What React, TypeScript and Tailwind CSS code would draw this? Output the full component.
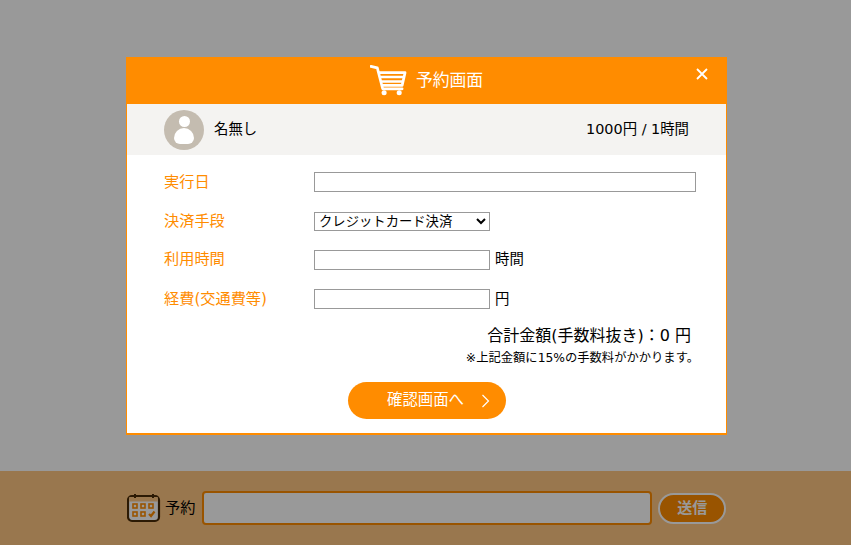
import React from "react";

const font = { fontFamily: '"DejaVu Sans", "Noto Sans CJK JP", sans-serif' };

function Cart() {
  return (
    <svg width="37" height="32" viewBox="0 0 38 32" fill="none" className="mr-[9px] -mt-[1px]">
      <path d="M1 2 L7.5 3.5 L13 25 H33" stroke="#fff" strokeWidth="2.8" strokeLinecap="round" strokeLinejoin="round" />
      <path d="M9 8.5 H36 L33 21.5 H12.5" stroke="#fff" strokeWidth="2.8" strokeLinejoin="round" />
      <path d="M11 13 H34.5 M12 17.5 H33.5" stroke="#fff" strokeWidth="2.6" />
      <circle cx="14.5" cy="29" r="2.6" fill="#fff" />
      <circle cx="30" cy="29" r="2.6" fill="#fff" />
    </svg>
  );
}

function Calendar() {
  return (
    <svg width="34" height="30" viewBox="0 0 34 30" fill="none">
      <rect x="1" y="3" width="31" height="25" rx="4" fill="#ffffff" stroke="#4a2c08" strokeWidth="2.2" />
      <path d="M2.2 4 H30.8 V8.5 H2.2 Z" fill="#ffc682" />
      <path d="M8 1 V5 M26 1 V5" stroke="#4a2c08" strokeWidth="2" />
      <g stroke="#ff8c00" strokeWidth="1.6" fill="none">
        <rect x="6" y="11" width="4" height="4" />
        <rect x="14" y="11" width="4" height="4" />
        <rect x="22" y="11" width="4" height="4" />
        <rect x="6" y="19" width="4" height="4" />
        <rect x="14" y="19" width="4" height="4" />
      </g>
      <path d="M22 21 L24 23 L27.5 18.5" stroke="#ff8c00" strokeWidth="2.2" />
    </svg>
  );
}

function Row({ label, children, tight }: { label: string; children: React.ReactNode; tight?: boolean }) {
  return (
    <div className="flex items-center h-[39px]">
      <div className={tight ? "w-[150px] text-[#ff8c00] text-[15.2px]" : "w-[150px] text-[#ff8c00] text-[15.2px] pt-[2px]"}>{label}</div>
      {children}
    </div>
  );
}

const inputCls = "w-[176px] h-[20px] border border-[#999] bg-white";

export default function App() {
  return (
    <div className="relative h-[545px] w-full overflow-hidden flex flex-col justify-end bg-white" style={font}>
      <footer className="h-[74px] bg-[#ffc682] flex items-center pl-[127px]">
        <Calendar />
        <span className="ml-[4px] text-[15.2px] text-black">予約</span>
        <div className="ml-[7px] w-[450px] h-[34px] rounded-[4px] border-2 border-[#ff8c00] bg-white" />
        <button className="ml-[6px] w-[68px] h-[31px] rounded-full bg-[#ff8c00] border-2 border-white text-white text-[15px] font-bold">
          送信
        </button>
      </footer>

      <div className="absolute inset-0 bg-black/40 flex justify-center items-start pt-[57px] pl-[2px]">
        <div className="w-[601px] h-[378px] bg-white border border-b-2 border-[#ff8c00] border-t-0 flex flex-col">
          <div className="relative h-[47px] -mx-[1px] bg-[#ff8c00] flex items-center justify-center text-white text-[16.8px]">
            <Cart />
            <span>予約画面</span>
            <svg width="12" height="12" viewBox="0 0 12 12" className="absolute left-[570px] top-[11px]">
              <path d="M1 1 L11 11 M11 1 L1 11" stroke="#fff" strokeWidth="1.8" />
            </svg>
          </div>

          <div className="h-[51px] bg-[#f4f3f1] flex items-center pl-[37px] pr-[37px] text-[14.4px] text-black">
            <div className="w-[40px] h-[40px] rounded-full bg-[#c4bcb0] overflow-hidden flex flex-col items-center">
              <div className="w-[11px] h-[11px] rounded-full bg-white mt-[6px]" />
              <div className="w-[20px] h-[16px] rounded-t-[10px] rounded-b-[6px] bg-white mt-[1px]" />
            </div>
            <span className="ml-[10px]">名無し</span>
            <span className="ml-auto">1000円 / 1時間</span>
          </div>

          <div className="flex-1 pl-[37px] pr-[30px] pt-[7px]">
            <Row label="実行日">
              <div className="w-[382px] h-[20px] border border-[#999] bg-white" />
            </Row>
            <Row label="決済手段">
              <select className="w-[176px] h-[19px] mt-[2px] border border-[#999] bg-white text-[13.33px] leading-[15px] text-black">
                <option>クレジットカード決済</option>
              </select>
            </Row>
            <Row label="利用時間" tight>
              <div className={inputCls} />
              <span className="ml-[5px] text-[14.4px] text-black">時間</span>
            </Row>
            <Row label="経費(交通費等)">
              <div className={inputCls} />
              <span className="ml-[5px] text-[14.4px] text-black pt-[2px]">円</span>
            </Row>
            <div className="text-right text-[16px] text-black leading-[20px] mt-[8px] pr-[5px]">合計金額(手数料抜き)：0 円</div>
            <div className="text-right text-[12.3px] text-black leading-[18px] mt-[3px] -mr-[3px]">※上記金額に15%の手数料がかかります。</div>
            <div className="flex justify-center pr-[6px] mt-[15px]">
              <button className="relative w-[158px] h-[37px] rounded-full bg-[#ff8c00] text-white text-[15.4px] pr-[3px]">
                確認画面へ
                <svg width="9" height="14" viewBox="0 0 9 14" className="absolute left-[133px] top-[12px]">
                  <path d="M1.5 1 L7.5 7 L1.5 13" stroke="#fff" strokeWidth="1.2" fill="none" />
                </svg>
              </button>
            </div>
          </div>
        </div>
      </div>
    </div>
  );
}
